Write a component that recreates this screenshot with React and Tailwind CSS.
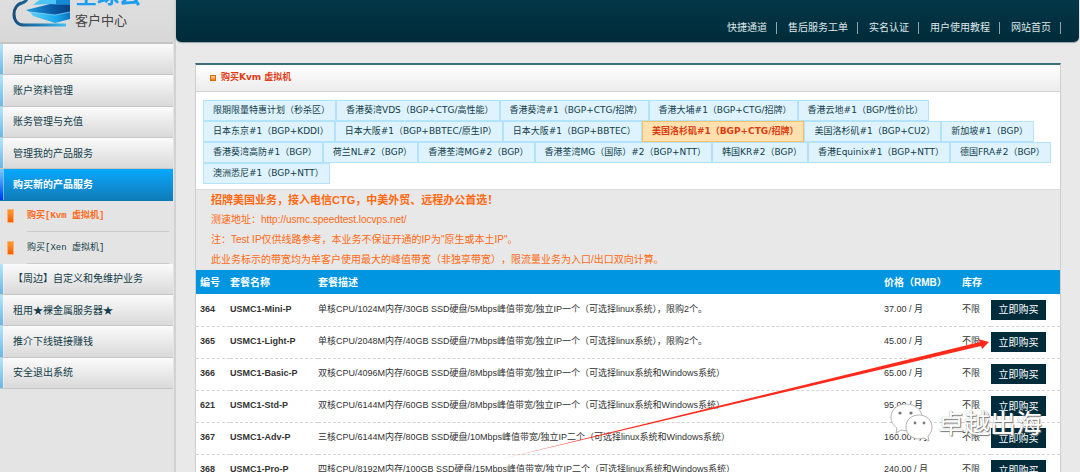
import React from 'react';

const topLinks = ['快捷通道', '售后服务工单', '实名认证', '用户使用教程', '网站首页'];

const menu = [
  { label: '用户中心首页' },
  { label: '账户资料管理' },
  { label: '账务管理与充值' },
  { label: '管理我的产品服务' },
  { label: '购买新的产品服务', active: true },
  { label: '购买[Kvm 虚拟机]', sub: true, active: true },
  { label: '购买[Xen 虚拟机]', sub: true },
  { label: '【周边】自定义和免维护业务' },
  { label: '租用★裸金属服务器★' },
  { label: '推介下线链接赚钱' },
  { label: '安全退出系统' },
];

const regions = [
  '限期限量特惠计划（秒杀区）',
  '香港葵湾VDS（BGP+CTG/高性能）',
  '香港葵湾#1（BGP+CTG/招牌）',
  '香港大埔#1（BGP+CTG/招牌）',
  '香港云地#1（BGP/性价比）',
  '日本东京#1（BGP+KDDI）',
  '日本大阪#1（BGP+BBTEC/原生IP）',
  '日本大阪#1（BGP+BBTEC）',
  '美国洛杉矶#1（BGP+CTG/招牌）',
  '美国洛杉矶#1（BGP+CU2）',
  '新加坡#1（BGP）',
  '香港葵湾高防#1（BGP）',
  '荷兰NL#2（BGP）',
  '香港荃湾MG#2（BGP）',
  '香港荃湾MG（国际）#2（BGP+NTT）',
  '韩国KR#2（BGP）',
  '香港Equinix#1（BGP+NTT）',
  '德国FRA#2（BGP）',
  '澳洲悉尼#1（BGP+NTT）',
];

const activeRegion = 8;

const plans = [
  { id: 364, name: 'USMC1-Mini-P', desc: '单核CPU/1024M内存/30GB SSD硬盘/5Mbps峰值带宽/独立IP一个（可选择linux系统），限购2个。', price: '37.00' },
  { id: 365, name: 'USMC1-Light-P', desc: '单核CPU/2048M内存/40GB SSD硬盘/7Mbps峰值带宽/独立IP一个（可选择linux系统），限购2个。', price: '45.00' },
  { id: 366, name: 'USMC1-Basic-P', desc: '双核CPU/4096M内存/60GB SSD硬盘/8Mbps峰值带宽/独立IP一个（可选择linux系统和Windows系统）', price: '65.00' },
  { id: 621, name: 'USMC1-Std-P', desc: '双核CPU/6144M内存/60GB SSD硬盘/8Mbps峰值带宽/独立IP一个（可选择linux系统和Windows系统）', price: '95.00' },
  { id: 367, name: 'USMC1-Adv-P', desc: '三核CPU/6144M内存/80GB SSD硬盘/10Mbps峰值带宽/独立IP二个（可选择linux系统和Windows系统）', price: '160.00' },
  { id: 368, name: 'USMC1-Pro-P', desc: '四核CPU/8192M内存/100GB SSD硬盘/15Mbps峰值带宽/独立IP二个（可选择linux系统和Windows系统）', price: '240.00' },
];

const Logo = () => (
  <div className="flex h-[42px] items-end overflow-hidden bg-gradient-to-b from-[#dedede] to-[#d8d8d8] pl-3">
    <svg className="h-[42px] w-[60px] shrink-0" viewBox="12 0 60 42" fill="none">
      <defs>
        <linearGradient id="cloud" x1="0" x2="1">
          <stop offset="0" stopColor="#174f7c" />
          <stop offset="0.5" stopColor="#2080ba" />
          <stop offset="1" stopColor="#3fc0f5" />
        </linearGradient>
        <linearGradient id="band" x1="0" x2="1">
          <stop offset="0" stopColor="#1fa0e0" />
          <stop offset="0.6" stopColor="#0a5ca8" />
          <stop offset="1" stopColor="#083f80" />
        </linearGradient>
        <linearGradient id="base" x1="0" x2="1">
          <stop offset="0" stopColor="#5fd0f8" />
          <stop offset="0.65" stopColor="#18a8ee" />
          <stop offset="1" stopColor="#0c74c0" />
        </linearGradient>
      </defs>
      <path d="M27 -2 C27 1 25 2 22 3 C17 4 14 9 14 14 C14 21 18 25 24 25 L66 25" stroke="url(#cloud)" strokeWidth="3" />
      <path d="M33 5 L42 -2 H68 L70 0 V6 L50 4 Z" fill="#4cc4f4" />
      <path d="M56 -2 H70 V6 L56 4 Z" fill="#1689d4" />
      <path d="M30 12 L50 14 L70 11 V19 L55 23 L33 16 Z" fill="url(#base)" />
      <path d="M26 10 L50 4 L70 5 V12 L55 15 L30 12 Z" fill="url(#band)" />
      <path d="M30 12 L55 15 L70 12" stroke="#8fdcfa" strokeWidth="0.7" />
      <path d="M18 29 H62" stroke="#ccd3d7" />
    </svg>
    <div className="pb-[13px] pl-[3px] text-[#444]">
      <div className="text-[22px] leading-[22px] font-bold whitespace-nowrap text-[#1b9df0]">全球云</div>
      <div className="pt-[5px] text-[13px] leading-[17px]">客户中心</div>
    </div>
  </div>
);

const MenuItem = ({ item }) => {
  if (item.sub) {
    return (
      <li className="flex items-center bg-[#e4e4e4] pl-[7px]">
        <span className="h-[14px] w-[7px] border border-[#f9b27a] bg-gradient-to-b from-[#ff9a2e] to-[#ff5a00]" />
        <a
          href="#"
          className={`mr-1 ml-[13px] flex h-full flex-1 items-center border-b border-[#cbcbcb] pt-[2px] font-['Liberation_Mono','Noto_Sans_CJK_SC',monospace] text-[9px] ${
            item.active ? 'font-bold text-[#ff6a1a]' : 'text-[#123c48]'
          }`}
        >
          {item.label}
        </a>
      </li>
    );
  }
  return (
    <li
      className={`flex border-b ${
        item.active
          ? 'border-[#0c78b4] bg-gradient-to-b from-[#08a8ff] to-[#0f7cb8]'
          : 'border-[#c6c6c6] bg-gradient-to-b from-[#fbfbfb] to-[#d9d9d9]'
      }`}
    >
      <span
        className={`w-[3px] ${
          item.active ? 'bg-gradient-to-b from-[#7cc8ff] to-[#0030ff]' : 'bg-gradient-to-b from-[#b5e5fb] to-[#68b7ea]'
        }`}
      />
      <a
        href="#"
        className={`flex flex-1 items-center border-l border-white/40 pl-[9px] text-[10px] whitespace-nowrap ${
          item.active ? 'font-bold text-white' : 'text-[#123c48]'
        }`}
      >
        {item.label}
      </a>
    </li>
  );
};

const Notice = () => (
  <div className="border-t border-[#dcdcdc] bg-[#e8e8e8] pl-[15px] text-[10px] leading-5 text-[#ff6a13] [text-spacing-trim:space-all]">
    <p className="text-[11px] leading-5 font-bold">招牌美国业务，接入电信CTG，中美外贸、远程办公首选！</p>
    <p>
      测速地址：<a href="#">http://usmc.speedtest.locvps.net/</a>
    </p>
    <p>注：Test IP仅供线路参考，本业务不保证开通的IP为"原生或本土IP"。</p>
    <p>此业务标示的带宽均为单客户使用最大的峰值带宽（非独享带宽），限流量业务为入口/出口双向计算。</p>
  </div>
);

const PlanTable = () => (
  <table className="w-full table-fixed border-collapse text-left text-[9px] whitespace-nowrap text-[#333]">
    <thead>
      <tr className="h-6 bg-[#0095e0] text-[10px] text-white">
        <th className="w-[34px] pl-1">编号</th>
        <th className="w-[88px]">套餐名称</th>
        <th>套餐描述</th>
        <th className="w-[78px]">价格（RMB）</th>
        <th className="w-[29px]">库存</th>
        <th className="w-[69px]" />
      </tr>
    </thead>
    <tbody>
      {plans.map((p) => (
        <tr key={p.id} className="h-8 border-b border-dashed border-[#d4d4d4]">
          <td className="pl-1 font-bold">{p.id}</td>
          <td className="font-bold">{p.name}</td>
          <td>{p.desc}</td>
          <td>{p.price} / 月</td>
          <td>不限</td>
          <td>
            <button className="block h-5 w-[55px] bg-[#002b3a] text-[10px] text-white">立即购买</button>
          </td>
        </tr>
      ))}
    </tbody>
  </table>
);

const Arrow = () => (
  <svg className="pointer-events-none absolute top-[330px] left-[490px] h-[140px] w-[510px]" viewBox="490 330 510 140">
    <defs>
      <linearGradient id="fade" x1="0" x2="1">
        <stop offset="0" stopColor="#ff2a1a" stopOpacity="0.2" />
        <stop offset="0.2" stopColor="#ff2a1a" />
      </linearGradient>
    </defs>
    <path d="M497 460 L980 342 L978 339 L989 342 L982 349 L981 346 Z" fill="url(#fade)" />
  </svg>
);

const Watermark = () => (
  <div className="pointer-events-none absolute top-[404px] left-[888px] flex items-center">
    <svg className="h-[40px] w-[46px] shrink-0" viewBox="888 404 46 40" fill="#fff" stroke="#a0a0a0" strokeWidth="0.8">
      <path d="M906 404 C897 404 891 410 891 417 C891 422 893 425 897 428 L896 433 L901 430 C912 433 922 427 922 417 C922 410 915 404 906 404 Z" />
      <path d="M919 415 C911 415 906 420 906 427 C906 434 912 439 919 439 L924 438 L929 441 L928 436 C931 433 932 430 932 427 C932 420 926 415 919 415 Z" />
      <g fill="#777" stroke="none">
        <circle cx="900" cy="413" r="1.6" />
        <circle cx="911" cy="413" r="1.6" />
        <circle cx="915" cy="423" r="1.4" />
        <circle cx="924" cy="423" r="1.4" />
      </g>
    </svg>
    <span className="ml-1 text-[26px] leading-[40px] whitespace-nowrap text-white [text-shadow:1px_1px_1px_#777,0_0_1px_#888]">卓越出海</span>
  </div>
);

const App = () => {
  return (
    <div className="relative flex h-screen overflow-hidden bg-[#e9e9e9] font-['Liberation_Sans','Noto_Sans_CJK_SC',sans-serif]">
      <aside className="w-[176px] shrink-0 border-r-2 border-[#d2d2d2] bg-[#e4e4e4]">
        <Logo />
        <ul className="mr-px grid min-h-[347px] auto-rows-fr border-t-2 border-[#c4c4c4]">
          {menu.map((item) => (
            <MenuItem key={item.label} item={item} />
          ))}
        </ul>
      </aside>

      <div className="min-w-0 flex-1">
        <header className="mr-px flex h-[42px] items-end justify-end rounded-b-[5px] bg-gradient-to-b from-[#033747] to-[#002b39] pr-[18px] pb-2 shadow-[0_1px_1px_#9aa5a9]">
          <nav className="flex items-center text-[10px] leading-3 text-[#dfe8ea]">
            {topLinks.map((label) => (
              <a key={label} href="#" className="border-r border-[#8fa4ab] pr-[9px] pl-[11px] first:pl-0">
                {label}
              </a>
            ))}
          </nav>
        </header>

        <main className="mx-[19px] mt-[21px] border-x border-t-2 border-x-[#cfcfcf] border-t-[#3a6f7d] bg-white">
          <h1 className="flex h-[27px] items-center border-b border-[#d4d4d4] bg-gradient-to-b from-white to-[#ececec] pl-[14px] font-['DejaVu_Sans','Noto_Sans_CJK_SC',sans-serif] text-[9px] font-bold text-[#e03c14]">
            <span className="mr-[5px] h-[6px] w-[6px] border border-[#d96a00] bg-gradient-to-b from-[#ffd9a0] to-[#f07800]" />
            购买Kvm 虚拟机
          </h1>
          <div className="flex flex-wrap px-[7px] pt-2 pb-[5px]">
            {regions.map((label, i) => (
              <button
                key={label}
                className={`h-[21px] border pr-[5px] pl-[9px] font-['DejaVu_Sans','Noto_Sans_CJK_SC',sans-serif] text-[9px] whitespace-nowrap ${
                  i === activeRegion
                    ? 'border-[#f5c06a] bg-[#ffe0ae] font-bold text-[#dc3c10]'
                    : 'border-[#b3e3fb] bg-[#def3fe] text-[#123c48]'
                }`}
              >
                {label}
              </button>
            ))}
          </div>
          <Notice />
          <PlanTable />
        </main>
      </div>

      <Arrow />
      <Watermark />
    </div>
  );
};

export default App;
